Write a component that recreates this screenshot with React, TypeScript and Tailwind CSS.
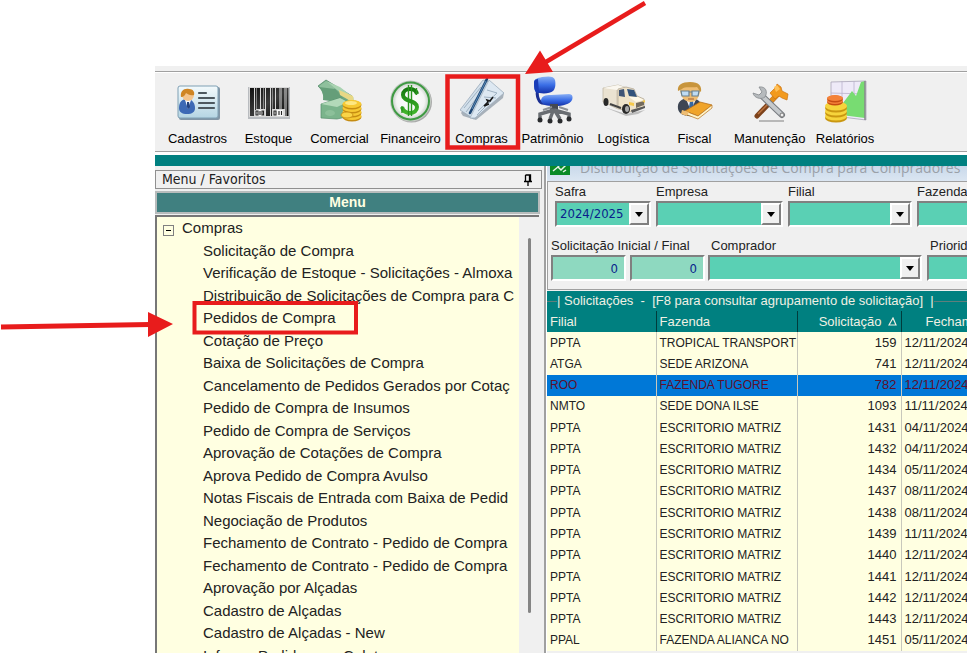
import React from "react";

const ARIAL = "font-['Liberation_Sans',Arial,sans-serif]";
const TAHOMA = "font-['DejaVu_Sans_Condensed','DejaVu_Sans',Tahoma,sans-serif]";

function Icon({ children }: { children: React.ReactNode }) {
  return (
    <svg viewBox="0 0 44 48" className="h-[48px] w-[44px] shrink-0" aria-hidden="true">
      {children}
    </svg>
  );
}

const CardIcon = () => (
  <Icon>
    <defs>
      <linearGradient id="card" x1="0" y1="0" x2="0" y2="1">
        <stop offset="0" stopColor="#f3fafc" />
        <stop offset="1" stopColor="#b5d5e3" />
      </linearGradient>
    </defs>
    <rect x="3" y="11" width="41" height="33" rx="2" fill="#8296a6" />
    <rect x="2" y="10" width="40" height="32" rx="2" fill="url(#card)" stroke="#7fa0b4" />
    <path d="M3 32c0-6 3-9 8-9s8 4 8 9c0 4-3 6-8 6s-8-2-8-6z" fill="#3c69b5" />
    <path d="M9 24l3 9 3-9z" fill="#f2f6fb" />
    <path d="M11 26h2l1 5-2 2-1-2z" fill="#24427e" />
    <circle cx="12" cy="19" r="6" fill="#f4c48c" />
    <path d="M5 21c-1-6 3-9 8-8 4 0 6 3 5 6-4 1-6-1-8-2-1 2-2 4-5 4z" fill="#cf8524" />
    <path d="M23 17h7M23 22h15M23 27h15M23 32h15" stroke="#4d585f" strokeWidth="2.200" strokeLinecap="round" />
  </Icon>
);

const BarcodeIcon = () => (
  <Icon>
    <defs>
      <linearGradient id="bars" x1="0" y1="0" x2="1" y2="1">
        <stop offset="0" stopColor="#111" />
        <stop offset="0.5" stopColor="#3a3a3a" />
        <stop offset="1" stopColor="#0a0a0a" />
      </linearGradient>
    </defs>
    <rect x="1" y="11" width="42" height="32" fill="#b9bcc0" />
    <rect x="2" y="11" width="40" height="30" fill="#d8d8d8" />
    <path
      d="M3 12h4v28H3zM8 12h1v28H8zM9.500 12h3.500v21H9.500zM14 12h2.500v21H14zM17 12h1v21h-1zM19 12h4v28h-4zM24 12h1v28h-1zM25.500 12h2.500v21h-2.500zM29 12h3.500v21H29zM33.500 12h1v21h-1zM35 12h2.500v21H35zM38.500 12h1v28h-1zM40 12h1.500v28H40z"
      fill="url(#bars)"
    />
    <path d="M8 34h9v6H8zM26 34h10v6H26z" fill="#f6f6f6" />
    <path
      d="M9 35h2v4H9zM13 35v4M15 35h1.500v4H15zM27 35h2v4h-2zM32 35v4M34.500 35v4"
      fill="none"
      stroke="#222"
      strokeWidth="1.100"
    />
  </Icon>
);

const MoneyIcon = () => (
  <Icon>
    <path d="M0 10l8-6 26 16 3 12-13 3z" fill="#6fa883" stroke="#4f8765" strokeWidth=".7" />
    <path d="M1 10l7-5 9 7-7 8-5 4c1-6-1-10-4-14z" fill="#8fc09d" />
    <path d="M1 11l16 2 8 9-13 3-7-1c1-5-1-9-4-13z" fill="#659e79" />
    <path d="M8 5l14 6 14 11-4 3L19 14z" fill="#a9d3b1" />
    <path d="M21 14l14 6 1 7-14-8z" fill="#e8d885" />
    <path d="M3 28l19-6 8 4-2 15-9 2-16-1z" fill="#7bb48c" stroke="#558e6a" strokeWidth=".7" />
    <path d="M3 28l19-6 8 4-11 5z" fill="#b3d9b9" />
    <ellipse cx="12" cy="37" rx="5" ry="3" fill="#8cc09a" />
    {[40, 36, 32, 28].map((y) => (
      <g key={y}>
        <ellipse cx="34" cy={y + 1} rx="9.5" ry="4.500" fill="#c58c12" />
        <ellipse cx="34" cy={y} rx="9.500" ry="4" fill="#f6c934" />
      </g>
    ))}
    <ellipse cx="33" cy="27" rx="6" ry="2" fill="#fde783" />
    <ellipse cx="29" cy="39" rx="6" ry="3" fill="#f9d548" stroke="#c58c12" strokeWidth=".8" />
  </Icon>
);

const DollarIcon = () => (
  <Icon>
    <defs>
      <radialGradient id="coin">
        <stop offset="0" stopColor="#fff" />
        <stop offset=".75" stopColor="#f4f4f4" />
        <stop offset="1" stopColor="#c4cec4" />
      </radialGradient>
      <linearGradient id="sign" x1="0" y1="0" x2="0" y2="1">
        <stop offset="0" stopColor="#167a10" />
        <stop offset="1" stopColor="#41b52b" />
      </linearGradient>
    </defs>
    <circle cx="22.500" cy="26" r="20.500" fill="#a9a9a9" />
    <circle cx="21.500" cy="25" r="20.500" fill="#c3cbc3" />
    <circle cx="21.500" cy="25" r="18.500" fill="url(#coin)" stroke="#3f9a43" strokeWidth="2" />
    <path
      d="M28 18c-1-4-4-5-7-5-4 0-7 2-7 6 0 7 14 5 14 12 0 4-3 6-7 6-4 0-7-2-8-6"
      fill="none"
      stroke="url(#sign)"
      strokeWidth="4"
    />
    <path d="M27.500 12v7M13 30v7M19.500 9v31M22.500 9v31" stroke="#2a951f" strokeWidth="1.400" />
  </Icon>
);

const CheckIcon = () => (
  <Icon>
    <path d="M1 37L25 3l19 14-1 5-27 22-13-4z" fill="#a8b1ba" />
    <path d="M0 34L23 4l6 2-15 37z" fill="#d3e0eb" stroke="#9aabba" strokeWidth=".8" />
    <path d="M10 42L29 4l15 13-29 25z" fill="#dde8f2" stroke="#9fb0bf" strokeWidth=".8" />
    <path d="M4 32L21 11M6 36L22 15M18 35l19-18M17 39l14-14M27 14l10 3M24 21l12 1" stroke="#9eb1c2" strokeWidth="1" />
    <path d="M10 37L27 3" stroke="#1e4674" strokeWidth="2.600" strokeLinecap="round" />
    <path d="M12 33L26 5" stroke="#6b9dc8" strokeWidth=".8" />
    <path d="M24 30l4-4-1-2 3 1 3-4M24 30l5-2" fill="none" stroke="#161616" strokeWidth="1.500" />
  </Icon>
);

const ChairIcon = () => (
  <Icon>
    <defs>
      <linearGradient id="seat" x1="0" y1="0" x2="0" y2="1">
        <stop offset="0" stopColor="#8ab0f5" />
        <stop offset=".5" stopColor="#3b6ee6" />
        <stop offset="1" stopColor="#1230a8" />
      </linearGradient>
    </defs>
    <path d="M7 11c-2 8 0 18 8 16" fill="none" stroke="#1b2f92" strokeWidth="3" />
    <path d="M3 7c0-4 3-5 8-6 7-1 12-1 13 3 1 5 0 9-2 11-3 3-13 3-17 1-2-2-2-6-2-9z" fill="url(#seat)" />
    <path d="M3 6c0-2 2-3 4-3L8 17c-4 0-5-3-5-11z" fill="#1a3db8" />
    <path d="M10 24c1-4 4-5 10-5l18-1c4 0 4 4 3 6-2 4-9 6-17 6s-14-1-14-6z" fill="url(#seat)" />
    <path d="M19 28h8v9h-8z" fill="#454950" />
    <path d="M23 34L9 38v6M23 34l15 4v5M22 35l-3 8M24 35l5 8" fill="none" stroke="#696d72" strokeWidth="3.500" />
    <g fill="#292b2e">
      <circle cx="9" cy="44" r="2.500" />
      <circle cx="19" cy="45" r="2.500" />
      <circle cx="29" cy="45" r="2.500" />
      <circle cx="38" cy="43" r="2.500" />
    </g>
    <path d="M12 34l9-3M28 31l9 3" stroke="#8c9096" strokeWidth="2" />
  </Icon>
);

const TruckIcon = () => (
  <Icon>
    <path d="M2 31l22 7 19-4-7 4-12 2z" fill="#bdbdbd" />
    <path d="M1 12l15-3 9 3-1 22-8-1-15-7z" fill="#eae2d1" stroke="#bcb29e" strokeWidth=".7" />
    <path d="M1 12l15-3 9 3-10 2z" fill="#faf7ef" />
    <path d="M15 14v18" stroke="#cec3ae" />
    <path d="M16 13l8-2 8 2 3 7 7 3v8l-14 5-12-4z" fill="#efe3c9" stroke="#a99f8c" strokeWidth=".7" />
    <path d="M25 13l7 1 3 7-8-1z" fill="#33537b" />
    <path d="M17 14l5-1 1 8-6-1z" fill="#405575" />
    <path d="M27 21l9 0 6 3-8 2z" fill="#fff9e8" />
    <path d="M34 27l8-2v4l-8 3z" fill="#746c5e" />
    <path d="M27 26l5 1v3l-5-1zM40 25l3-1v3z" fill="#f6c94b" />
    <path d="M29 34l14-4v2l-13 5z" fill="#5a5a5a" />
    <ellipse cx="24" cy="33" rx="4" ry="5" fill="#292929" />
    <ellipse cx="25" cy="33" rx="2" ry="3" fill="#aaa" />
    <ellipse cx="4" cy="26" rx="2.500" ry="4" fill="#292929" />
    <path d="M8 28l11 4" stroke="#444" strokeWidth="2" />
  </Icon>
);

const ClerkIcon = () => (
  <Icon>
    <path d="M5 33c-1-7 3-11 12-11 8 0 12 4 12 11l-8 7C12 41 6 38 5 33z" fill="#3d4653" />
    <path d="M13 23l5 12 5-12z" fill="#f3f3f3" />
    <path d="M17 25h3l1 6-2 4-3-4z" fill="#36679f" />
    <path d="M7 14c0-5 4-7 10-7 7 0 10 4 10 8-1 7-4 11-9 11-7 0-10-5-11-12z" fill="#efbd72" />
    <path d="M5 15C4 9 9 6 17 6c9 0 12 4 11 10-2-1-2-3-4-5-5 1-12-1-15 2z" fill="#c8953c" />
    <path d="M8 15h8v5H9zM19 15h7l-1 5h-6zM16 16h3" fill="#bfdcf4" stroke="#68808f" strokeWidth="1.200" />
    <path d="M15 23h6" stroke="#a45d32" />
    <path d="M12 35l15-9 12 3-14 11z" fill="#f0a42a" stroke="#b8701a" strokeWidth=".8" />
    <path d="M12 35l13 5 14-11v3L25 43l-13-5z" fill="#fff4c9" stroke="#b8701a" strokeWidth=".7" />
    <path d="M9 34l7 2-2 4-6-2z" fill="#efbd72" />
  </Icon>
);

const ToolsIcon = () => (
  <Icon>
    <path d="M11 45h25" stroke="#b8b8b8" strokeWidth="2" />
    <path d="M9 40l21-22" stroke="#7d421b" strokeWidth="5" strokeLinecap="round" />
    <path d="M21 27l9-9" stroke="#e08c1c" strokeWidth="5" />
    <path d="M10 38l12-12" stroke="#bd7441" strokeWidth="1.500" />
    <path d="M22 17l6-6 1-3 4 3 1 4 6 3-1 6-5-2-3-2-4 3z" fill="#f29a1e" stroke="#cb7312" strokeWidth=".7" />
    <path d="M26 11l3-2 3 4-4 3z" fill="#ffc15a" />
    <path d="M14 20l20 19" stroke="#777b80" strokeWidth="6" strokeLinecap="round" />
    <path d="M14 20l20 19" stroke="#c5c9cc" strokeWidth="4" strokeLinecap="round" />
    <path d="M11 11c7-1 9 5 6 10-4 3-11 1-12-4l6 2 3-3z" fill="#b6babd" stroke="#868a8e" strokeWidth=".8" />
    <circle cx="34" cy="39" r="2" fill="#efefef" stroke="#777" />
  </Icon>
);

const ReportIcon = () => (
  <Icon>
    <path d="M8 6l35-1v39l-24-3L8 34z" fill="#eeeaf8" stroke="#aaa4b8" strokeWidth=".8" />
    <path d="M19 5v33M31 5v33M8 17l35 1M8 29h35" stroke="#b9b2cb" strokeWidth=".8" />
    <path d="M9 22l4-3 7 8 9-12 4 5 5-14 4-1v37l-24-3-9-7z" fill="#78dc72" />
    <path d="M42 5v39" stroke="#88898d" strokeWidth="1.500" />
    {[40, 35, 30].map((y) => (
      <g key={y}>
        <ellipse cx="13" cy={y + 2} rx="11" ry="4.500" fill="#ca9711" />
        <ellipse cx="13" cy={y} rx="11" ry="4.500" fill="#f6d43c" />
      </g>
    ))}
    {[25, 22].map((y) => (
      <g key={y}>
        <ellipse cx="12" cy={y + 1} rx="8" ry="3.500" fill="#c64b12" />
        <ellipse cx="12" cy={y} rx="8" ry="3" fill="#f48139" />
      </g>
    ))}
  </Icon>
);

const modules = [
  { label: "Cadastros", icon: <CardIcon /> },
  { label: "Estoque", icon: <BarcodeIcon /> },
  { label: "Comercial", icon: <MoneyIcon /> },
  { label: "Financeiro", icon: <DollarIcon /> },
  { label: "Compras", icon: <CheckIcon /> },
  { label: "Patrimônio", icon: <ChairIcon /> },
  { label: "Logística", icon: <TruckIcon /> },
  { label: "Fiscal", icon: <ClerkIcon /> },
  { label: "Manutenção", icon: <ToolsIcon /> },
  { label: "Relatórios", icon: <ReportIcon /> },
];

const menuItems = [
  "Solicitação de Compra",
  "Verificação de Estoque - Solicitações - Almoxa",
  "Distribuição de Solicitações de Compra para C",
  "Pedidos de Compra",
  "Cotação de Preço",
  "Baixa de Solicitações de Compra",
  "Cancelamento de Pedidos Gerados por Cotaç",
  "Pedido de Compra de Insumos",
  "Pedido de Compra de Serviços",
  "Aprovação de Cotações de Compra",
  "Aprova Pedido de Compra Avulso",
  "Notas Fiscais de Entrada com Baixa de Pedid",
  "Negociação de Produtos",
  "Fechamento de Contrato - Pedido de Compra",
  "Fechamento de Contrato - Pedido de Compra",
  "Aprovação por Alçadas",
  "Cadastro de Alçadas",
  "Cadastro de Alçadas - New",
  "Informa Pedido para Coleta",
];

const rows = [
  ["PPTA", "TROPICAL TRANSPORT", "159", "12/11/2024"],
  ["ATGA", "SEDE ARIZONA", "741", "12/11/2024"],
  ["ROO", "FAZENDA TUGORE", "782", "12/11/2024"],
  ["NMTO", "SEDE DONA ILSE", "1093", "11/11/2024"],
  ["PPTA", "ESCRITORIO MATRIZ", "1431", "04/11/2024"],
  ["PPTA", "ESCRITORIO MATRIZ", "1432", "04/11/2024"],
  ["PPTA", "ESCRITORIO MATRIZ", "1434", "05/11/2024"],
  ["PPTA", "ESCRITORIO MATRIZ", "1437", "08/11/2024"],
  ["PPTA", "ESCRITORIO MATRIZ", "1438", "08/11/2024"],
  ["PPTA", "ESCRITORIO MATRIZ", "1439", "11/11/2024"],
  ["PPTA", "ESCRITORIO MATRIZ", "1440", "12/11/2024"],
  ["PPTA", "ESCRITORIO MATRIZ", "1441", "12/11/2024"],
  ["PPTA", "ESCRITORIO MATRIZ", "1442", "12/11/2024"],
  ["PPTA", "ESCRITORIO MATRIZ", "1443", "12/11/2024"],
  ["PPAL", "FAZENDA ALIANCA NO", "1451", "05/11/2024"],
];

const SUNKEN = "border-2 border-t-[#808080] border-l-[#808080] border-r-white border-b-white";

function Combo({ id, label, width, value, indent = "" }: { id: string; label: string; width: string; value?: string; indent?: string }) {
  return (
    <div className={`flex shrink-0 flex-col ${width}`}>
      <label htmlFor={id} className={`h-[18px] whitespace-nowrap leading-[18px] ${indent}`}>
        {label}
      </label>
      <div className={`relative h-[26px] bg-[#5ad0b4] ${SUNKEN}`}>
        <select
          id={id}
          className={`h-full w-full appearance-none bg-transparent pl-[3px] text-[13px] text-[#0a1f8c] outline-none ${TAHOMA}`}
        >
          <option>{value ?? ""}</option>
        </select>
        <span className="pointer-events-none absolute inset-y-0 right-0 flex w-[20px] items-center justify-center border-2 border-t-white border-l-white border-r-[#808080] border-b-[#808080] bg-[#f0f0f0]">
          <span className="border-x-4 border-t-[5px] border-x-transparent border-t-black" />
        </span>
      </div>
    </div>
  );
}

function NumberBox({ id, label }: { id: string; label: string }) {
  return (
    <input
      id={id}
      aria-label={label}
      defaultValue="0"
      className={`h-[26px] w-[75px] bg-[#8ed9c0] pr-[6px] text-right text-[13px] text-[#0a1f8c] outline-none ${SUNKEN} ${TAHOMA}`}
    />
  );
}

function Toolbar() {
  return (
    <nav className="shrink-0 bg-[#f0f0f0] pt-[5px]">
      <div className="flex h-[81px] items-start border-y border-[#a0a0a0] pl-[7px] shadow-[inset_0_1px_0_#fff]">
        {modules.map((m) => (
          <button key={m.label} type="button" className="flex min-w-[71px] shrink-0 flex-col items-center px-1 pt-1 text-[13px] text-black">
            {m.icon}
            <span className="mt-[7px] leading-4">{m.label}</span>
          </button>
        ))}
      </div>
      <div className="h-[3px] bg-white" />
      <div className="h-[11px] bg-[#008080]" />
    </nav>
  );
}

function MenuPanel() {
  return (
    <aside className="flex w-[391px] shrink-0 flex-col border-r-2 border-[#a0a0a0] bg-[#f0f0f0] pt-[4px]">
      <div className="mr-[2px] flex h-[19px] shrink-0 items-center justify-between border border-[#909090] pr-[8px] pl-[6px]">
        <span className={`text-[14px] text-[#222] ${TAHOMA}`}>Menu / Favoritos</span>
        <button type="button" aria-label="Fixar">
          <svg viewBox="0 0 10 12" className="h-[12px] w-[10px]">
            <path d="M2.500 1h5v6M2.500 1v6M1 7.500h8M5 8v4M6.500 1v6" fill="none" stroke="#000" strokeWidth="1.300" />
          </svg>
        </button>
      </div>
      <h2 className="mt-[2px] mr-[4px] flex h-[23px] shrink-0 items-center justify-center border-2 border-[#b8bcbc] bg-[#408080] text-[14px] font-bold text-[#ffffe1]">
        Menu
      </h2>
      <div className="mt-px mr-[5px] flex min-h-0 flex-1 border-t-2 border-l-2 border-[#777]">
        <div className="min-w-0 flex-1 overflow-hidden bg-[#ffffe1] text-[15px] text-[#222]">
          <ul className="grid h-[450px] auto-rows-fr">
            <li className="flex items-center pl-[6px]">
              <span className="mt-1 flex h-[11px] w-[11px] items-center justify-center border border-[#808080]">
                <span className="h-px w-[5px] bg-black" />
              </span>
              <span className="pl-[8px]">Compras</span>
            </li>
            {menuItems.map((item, i) => (
              <li key={i} className="flex min-w-0 items-center overflow-hidden pl-[46px] whitespace-nowrap">
                <a href="#">{item}</a>
              </li>
            ))}
          </ul>
        </div>
        <div className="flex w-[20px] justify-center bg-[#f0f0f0] pt-[21px]">
          <div className="h-[375px] w-[3px] rounded-full bg-[#858585]" />
        </div>
      </div>
    </aside>
  );
}

function Filters() {
  return (
    <form className="flex h-[109px] shrink-0 flex-col border-y border-l border-[#a0a0a0] bg-[#f0f0f0] text-[13px] text-[#222]">
      <div className="flex gap-[5px] pt-px pl-[7px]">
        <Combo id="safra" label="Safra" width="w-[96px]" value="2024/2025" />
        <Combo id="empresa" label="Empresa" width="w-[127px]" />
        <Combo id="filial" label="Filial" width="w-[124px]" />
        <Combo id="fazenda" label="Fazenda" width="w-[160px]" />
      </div>
      <div className="flex gap-[5px] pt-[10px] pl-[3px]">
        <div className="w-[152px] shrink-0">
          <label htmlFor="sol-ini" className="block h-[18px] leading-[18px] whitespace-nowrap">
            Solicitação Inicial / Final
          </label>
          <div className="flex gap-1">
            <NumberBox id="sol-ini" label="Solicitação Inicial" />
            <NumberBox id="sol-fim" label="Solicitação Final" />
          </div>
        </div>
        <Combo id="comprador" label="Comprador" width="w-[214px]" indent="pl-[3px]" />
        <Combo id="prioridade" label="Prioridade" width="w-[160px]" indent="pl-[3px]" />
      </div>
    </form>
  );
}

function RequestsTable() {
  return (
    <section className="mt-px w-max min-w-full bg-[#008080] text-[13px]">
      <div className="flex h-[20px] items-center text-[#f0f0e4]">
        <span className="h-px w-[10px] bg-[#5f7f7c]" />
        <span className="whitespace-pre">{"| Solicitações  -  [F8 para consultar agrupamento de solicitação]  |"}</span>
        <span className="h-px flex-1 bg-[#5f7f7c]" />
      </div>
      <table className="h-[340px] w-[480px] table-fixed border-collapse">
        <colgroup>
          <col className="w-[109px]" />
          <col className="w-[141px]" />
          <col className="w-[104px]" />
          <col className="w-[126px]" />
        </colgroup>
        <thead>
          <tr className="h-[21px] text-left text-[#f0f0e4]">
            <th className="border-r border-[#003c3c] p-0 pl-[3px] font-normal">Filial</th>
            <th className="border-r border-[#003c3c] p-0 pl-[3px] font-normal">Fazenda</th>
            <th className="border-r border-[#003c3c] p-0 pr-[3px] text-right font-normal whitespace-nowrap">
              Solicitação
              <svg viewBox="0 0 10 9" className="ml-1.5 inline h-[9px] w-[10px] align-baseline" aria-hidden="true">
                <path d="M1 8L5 1l3 7z" fill="none" stroke="#f0f0e4" strokeWidth="1.200" />
              </svg>
            </th>
            <th className="p-0 pl-[24px] font-normal">Fechamento</th>
          </tr>
        </thead>
        <tbody>
          {rows.map((r, i) => (
            <tr key={r[2]} className={i === 2 ? "bg-[#0078d7] text-[#5f0f2c]" : "bg-[#ffffe1] text-[#222]"}>
              <td className="overflow-hidden border-r border-[#c8c8bc] p-0 pl-[3px] text-[12px] leading-4 whitespace-nowrap">{r[0]}</td>
              <td className="overflow-hidden border-r border-[#c8c8bc] p-0 pl-[3px] text-[12px] leading-4 whitespace-nowrap">{r[1]}</td>
              <td className="border-r border-[#c8c8bc] p-0 pr-[4px] text-right leading-4">{r[2]}</td>
              <td className="p-0 pl-[3px] leading-4">{r[3]}</td>
            </tr>
          ))}
        </tbody>
      </table>
    </section>
  );
}

function Annotations() {
  return (
    <svg viewBox="0 0 967 653" className="pointer-events-none absolute top-0 left-0 h-[653px] w-[967px]" aria-hidden="true">
      <g fill="none" stroke="#e81c1c">
        <rect x="447.500" y="76.500" width="70.500" height="71" strokeWidth="4.500" />
        <rect x="194.500" y="303" width="161.500" height="29.500" strokeWidth="4" />
        <path d="M645 3L545 62.500" strokeWidth="4.500" />
        <path d="M1 327L150 324.500" strokeWidth="5" />
      </g>
      <path d="M525 74l15-23.500L553 72zM148 312l25 12-25 13z" fill="#e81c1c" />
    </svg>
  );
}

export default function App() {
  return (
    <div className={`relative h-screen overflow-hidden bg-white ${ARIAL}`}>
      <div className="flex h-full flex-col pt-[66px] pl-[155px]">
        <Toolbar />
        <main className="flex min-h-0 flex-1 bg-[#f0f0f0]">
          <MenuPanel />
          <div className="flex min-w-0 flex-1 flex-col overflow-hidden border-l border-white bg-[#f0f0f0]">
            <header className="flex h-[15px] shrink-0 items-end gap-[10px] overflow-hidden bg-linear-to-b from-[#c9d9ea] to-[#dbe6f2] pl-[3px]">
              <svg viewBox="0 0 20 18" className="mb-[6px] h-[18px] w-[20px] shrink-0" aria-hidden="true">
                <rect width="20" height="18" fill="#0a8a26" />
                <path d="M3 14l5-4 3 3 5-5M9 10l-3-4M13 15l3-2" stroke="#e6f3e8" strokeWidth="1.500" fill="none" />
              </svg>
              <h1 className="mb-[2px] font-['Open_Sans','Noto_Sans',sans-serif] text-[14px] leading-[22px] whitespace-nowrap text-[#9aa0a8]">
                Distribuição de Solicitações de Compra para Compradores
              </h1>
            </header>
            <Filters />
            <RequestsTable />
          </div>
        </main>
      </div>
      <Annotations />
    </div>
  );
}
